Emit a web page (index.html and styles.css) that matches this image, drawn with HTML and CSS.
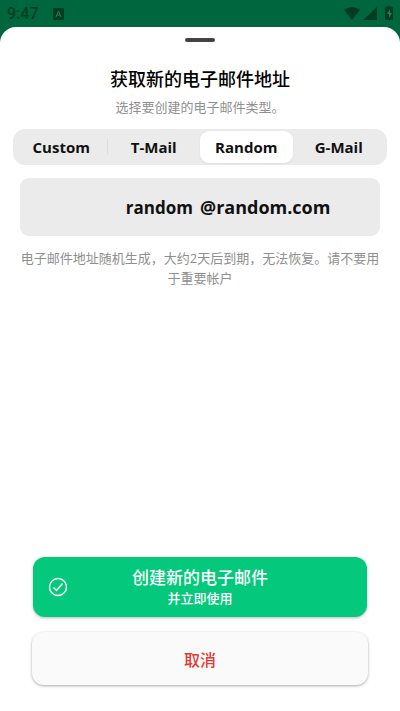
FILE: index.html
```html
<!DOCTYPE html>
<html lang="zh-CN">
<head>
    <meta charset="UTF-8">
    <meta name="viewport" content="width=device-width, initial-scale=1.0">
    <title>获取新的电子邮件地址</title>
    <link rel="stylesheet" href="styles.css">
</head>
<body>
    <div class="status-bar">
        <span class="time">9:47</span>
        <svg class="app-icon" width="12" height="12" viewBox="0 0 12 12">
            <rect width="11" height="12" rx="1" fill="#003d24"/>
            <path d="M3 9 L5.5 3 L8 9 M4 7 H7" fill="none" stroke="#2f7a57" stroke-width="1"/>
        </svg>
        <svg class="signals" width="52" height="16" viewBox="0 0 52 16" fill="#003d24">
            <path d="M0 4 Q8 -2 16 4 L8 14 Z"/>
            <path d="M33 1 V14 H19 Z"/>
            <path d="M43 1 V0 H47 V1 H48 Q49 1 49 2 V13 Q49 14 48 14 H42 Q41 14 41 13 V2 Q41 1 42 1 Z"/>
            <path d="M46 3 L43 8 H45 V12 L48 7 H46 Z" fill="#2f7a57"/>
        </svg>
    </div>

    <form class="sheet">
        <div class="handle"></div>
        <h1>获取新的电子邮件地址</h1>
        <p class="subtitle">选择要创建的电子邮件类型。</p>

        <div class="tabs">
            <button type="button">Custom</button>
            <button type="button">T-Mail</button>
            <button type="button" class="active">Random</button>
            <button type="button">G-Mail</button>
        </div>

        <div class="address">
            <input type="text" id="uname" name="uname" value="random" aria-label="电子邮件名称" readonly>
            <label for="uname">@random.com</label>
        </div>

        <p class="note">电子邮件地址随机生成，大约2天后到期，无法恢复。请不要用于重要帐户</p>

        <div class="actions">
            <button type="submit" class="create">
                <svg class="check" width="20" height="20" viewBox="0 0 20 20" fill="none" stroke="#fff">
                    <circle cx="10" cy="10" r="8.5" stroke-width="1.4"/>
                    <path d="M5.5 10.5 L8.5 13.5 L14.5 6.5" stroke-width="1.5"/>
                </svg>
                <span class="create-text">创建新的电子邮件</span>
                <span class="create-note">并立即使用</span>
            </button>
            <button type="button" class="cancel">取消</button>
        </div>
    </form>
</body>
</html>
```

FILE: styles.css
```css
* {
    margin: 0;
    padding: 0;
    box-sizing: border-box;
}
body {
    display: flex;
    flex-direction: column;
    min-height: 100vh;
    background-color: #00663d;
    font-family: "Open Sans", "Noto Sans CJK SC", sans-serif;
    text-align: center;
}
button, input {
    border: none;
    font-family: inherit;
}
button {
    cursor: pointer;
}
.status-bar {
    display: flex;
    align-items: center;
    height: 27px;
    padding: 0 4px 0 7px;
}
.time {
    font-family: Roboto, sans-serif;
    font-size: 16px;
    font-weight: 500;
    color: #003d24;
}
.app-icon {
    margin-left: 14px;
}
.signals {
    margin-left: auto;
}
.sheet {
    flex: 1;
    display: flex;
    flex-direction: column;
    padding: 11px 13px 26px;
    background-color: #fff;
    border-radius: 16px 16px 0 0;
}
.handle {
    width: 30px;
    height: 4px;
    margin: 0 auto 24px;
    background-color: #444;
    border-radius: 2px;
}
h1 {
    font-size: 18px;
    line-height: 27px;
    font-weight: 500;
    color: #000;
}
.subtitle, .note {
    font-size: 13px;
    line-height: 20px;
    color: #8f8f8f;
}
.subtitle {
    margin: 4px 0 12px;
}
.tabs {
    display: flex;
    padding: 2px;
    background-color: #ebebeb;
    border-radius: 12px;
}
.tabs button {
    flex: 1;
    height: 32px;
    position: relative;
    background: none;
    border-radius: 9px;
    font-size: 15px;
    font-weight: 700;
    color: #111;
}
.tabs .active {
    background-color: #fff;
    box-shadow: 0 1px 2px #ddd;
}
/* thin line between the first two tabs */
.tabs button:first-child::after {
    content: "";
    position: absolute;
    right: 0;
    top: 8px;
    bottom: 8px;
    width: 1px;
    background-color: #ddd;
}
.address {
    display: flex;
    align-items: center;
    gap: 7px;
    height: 58px;
    margin: 13px 7px 12px;
    padding-right: 7px;
    background-color: #ebebeb;
    border-radius: 9px;
    color: #111;
    font-weight: 700;
}
.address input {
    flex: 1;
    min-width: 0;
    background: none;
    text-align: right;
    font-size: 17px;
    font-weight: 700;
    color: #111;
}
.address label {
    flex: 1;
    font-size: 18px;
    text-align: left;
}
.note {
    padding: 0 3px;
}
.actions {
    display: flex;
    flex-direction: column;
    gap: 15px;
    margin: auto 19px 0;
}
.actions button {
    border-radius: 12px;
}
.create {
    display: flex;
    flex-direction: column;
    align-items: center;
    justify-content: center;
    position: relative;
    height: 60px;
    margin: 0 1px;
    background-color: #04c97c;
    box-shadow: 0 1px 3px #bbb;
    color: #fff;
}
.check {
    position: absolute;
    left: 15px;
    top: 20px;
}
.create-text {
    font-size: 17px;
    line-height: 22px;
    font-weight: 500;
}
.create-note {
    font-size: 13px;
    line-height: 18px;
    font-weight: 500;
}
.cancel {
    height: 53px;
    background-color: #fafafa;
    box-shadow: 0 1px 3px #aaa;
    font-size: 16px;
    font-weight: 500;
    color: #e53935;
}
```
